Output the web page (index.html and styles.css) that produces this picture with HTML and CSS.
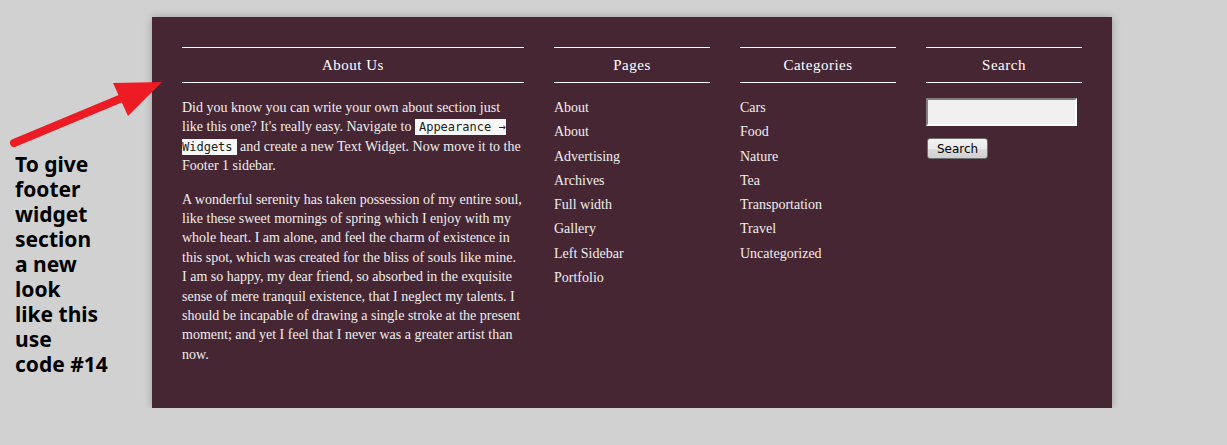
FILE: index.html
```html
<!DOCTYPE html>
<html lang="en">
<head>
  <meta charset="UTF-8" />
  <title>Footer Widgets</title>
  <link rel="stylesheet" href="styles.css">
</head>
<body>
  <div class="page">
    <svg class="arrow" width="170" height="150" viewBox="0 0 170 150">
      <line x1="14" y1="143" x2="122" y2="98" stroke="#ed1c24" stroke-width="8" stroke-linecap="round" />
      <polygon points="113,83 162,82 128,116" fill="#ed1c24" />
    </svg>

    <aside class="note">
      <p>To give<br>footer<br>widget<br>section<br>a new<br>look<br>like this<br>use<br>code #14</p>
    </aside>

    <footer class="footer-widgets">
      <section class="widget">
        <h3 class="widget-title">About Us</h3>
        <p>Did you know you can write your own about section just like this one? It's really easy. Navigate to <code>Appearance &rarr; Widgets</code> and create a new Text Widget. Now move it to the Footer 1 sidebar.</p>
        <p>A wonderful serenity has taken possession of my entire soul, like these sweet mornings of spring which I enjoy with my whole heart. I am alone, and feel the charm of existence in this spot, which was created for the bliss of souls like mine. I am so happy, my dear friend, so absorbed in the exquisite sense of mere tranquil existence, that I neglect my talents. I should be incapable of drawing a single stroke at the present moment; and yet I feel that I never was a greater artist than now.</p>
      </section>

      <section class="widget">
        <h3 class="widget-title">Pages</h3>
        <ul>
          <li><a href="#">About</a></li>
          <li><a href="#">About</a></li>
          <li><a href="#">Advertising</a></li>
          <li><a href="#">Archives</a></li>
          <li><a href="#">Full width</a></li>
          <li><a href="#">Gallery</a></li>
          <li><a href="#">Left Sidebar</a></li>
          <li><a href="#">Portfolio</a></li>
        </ul>
      </section>

      <section class="widget">
        <h3 class="widget-title">Categories</h3>
        <ul>
          <li><a href="#">Cars</a></li>
          <li><a href="#">Food</a></li>
          <li><a href="#">Nature</a></li>
          <li><a href="#">Tea</a></li>
          <li><a href="#">Transportation</a></li>
          <li><a href="#">Travel</a></li>
          <li><a href="#">Uncategorized</a></li>
        </ul>
      </section>

      <section class="widget">
        <h3 class="widget-title">Search</h3>
        <form class="search-form" onsubmit="return false">
          <input type="text" />
          <button type="submit">Search</button>
        </form>
      </section>
    </footer>
  </div>
</body>
</html>
```

FILE: styles.css
```css
body {
  margin: 0;
  background: #d1d1d1;
  font-family: "Liberation Serif", serif;
}
.page {
  position: relative;
  display: flex;
  align-items: flex-start;
  padding-top: 17px;
}
.arrow {
  position: absolute;
  left: 0;
  top: 0;
  z-index: 2;
}
.note {
  width: 152px;
  flex-shrink: 0;
}
.note p {
  margin: 135px 0 0 15px;
  font: bold 21px/25px "Noto Sans", sans-serif;
  color: #000;
}
.footer-widgets {
  width: 960px;
  box-sizing: border-box;
  padding: 30px;
  background: #472633;
  box-shadow: 0 0 8px rgba(0, 0, 0, 0.25);
  display: grid;
  grid-template-columns: 342px 156px 156px 156px;
  column-gap: 30px;
  color: #eee;
  font-size: 14px;
  line-height: 19.4px;
}
.widget-title {
  margin: 0 0 15px;
  padding: 8px 0 7px;
  border-top: 1px solid #fff;
  border-bottom: 1px solid #fff;
  font-size: 15px;
  font-weight: normal;
  line-height: 19px;
  letter-spacing: 0.5px;
  text-align: center;
  color: #fff;
}
.widget p {
  margin: 0 0 14px;
}
.widget ul {
  list-style: none;
  margin: 0;
  padding: 0;
}
.widget li {
  padding-bottom: 4.9px;
}
.widget a {
  color: #eee;
  text-decoration: none;
}
code {
  font: 12px "DejaVu Sans Mono", monospace;
  background: #f7f7f7;
  color: #222;
  padding: 1px 4px;
}
.search-form input {
  display: block;
  width: 151px;
  height: 28px;
  box-sizing: border-box;
  margin: 0 0 12px;
  border: 2px solid;
  border-color: #808080 #fff #fff #808080;
  background: #f0f0f0;
}
.search-form button {
  margin-left: 1px;
  width: 61px;
  height: 21px;
  padding: 0;
  font: 12px "DejaVu Sans", sans-serif;
  color: #000;
  border: 1px solid #707070;
  border-radius: 3px;
  background: linear-gradient(#f2f2f2, #ebebeb 50%, #dddddd 50%, #cfcfcf);
}
```
